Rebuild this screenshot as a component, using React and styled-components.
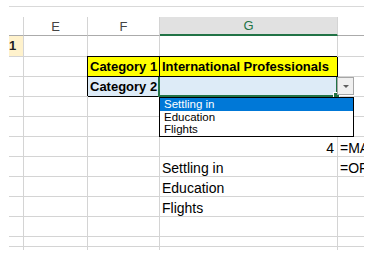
import React from 'react';
import styled, { createGlobalStyle } from 'styled-components';

const GlobalStyle = createGlobalStyle`
  html, body {
    margin: 0;
    padding: 0;
    background: #ffffff;
  }
  body {
    font-family: "Liberation Sans", Arial, sans-serif;
  }
`;

const Page = styled.div`
  padding: 6px 0 0 9px;
`;

const TopRule = styled.div`
  width: 355px;
  height: 1px;
  background: #d9d9d9;
  margin-bottom: 10px;
`;

const Sheet = styled.div`
  display: grid;
  grid-template-columns: 15px 64px 72px 178px 26px;
  grid-template-rows: 19px 21px repeat(9, 20px) 10px;
  width: 355px;
`;

const HeadCell = styled.div`
  box-sizing: border-box;
  display: flex;
  align-items: center;
  justify-content: center;
  font-size: 13px;
  color: ${(p) => (p.$selected ? '#217346' : '#444444')};
  background: ${(p) => (p.$selected ? '#e1e1e1' : '#ffffff')};
  border-right: ${(p) => (p.$last ? 'none' : '1px solid #d4d4d4')};
  border-bottom: ${(p) => (p.$selected ? '2px solid #217346' : '1px solid #ababab')};
`;

const RowHead = styled.div`
  box-sizing: border-box;
  display: flex;
  align-items: flex-end;
  padding-bottom: 3px;
  font-size: 13px;
  font-weight: 700;
  color: #1f1f1f;
  background: ${(p) => (p.$active ? '#fff2cc' : '#ffffff')};
  border-right: 1px solid #d4d4d4;
  border-bottom: ${(p) => (p.$open ? 'none' : '1px solid #d4d4d4')};
`;

const Cell = styled.div`
  box-sizing: border-box;
  display: flex;
  align-items: flex-end;
  justify-content: ${(p) => (p.$right ? 'flex-end' : 'flex-start')};
  padding: 0 ${(p) => (p.$right ? '3px' : '0')} ${(p) => (p.$bold ? '1px' : '0')} 2px;
  font-size: ${(p) => (p.$bold ? '13px' : '14px')};
  font-weight: ${(p) => (p.$bold ? 700 : 400)};
  line-height: 16px;
  color: #000000;
  white-space: nowrap;
  overflow: hidden;
  background: ${(p) => p.$fill || '#ffffff'};
  border-right: ${(p) => (p.$boxed ? '1px solid #000' : p.$last ? 'none' : '1px solid #d4d4d4')};
  border-bottom: ${(p) => (p.$boxed ? '1px solid #000' : p.$open ? 'none' : '1px solid #d4d4d4')};
  box-shadow: ${(p) => (p.$boxed ? '-1px -1px 0 0 #000' : 'none')};
`;

const ActiveCell = styled.div`
  box-sizing: border-box;
  position: relative;
  z-index: 2;
  background: #ddebf7;
  border-right: 2px solid #217346;
  border-bottom: 2px solid #217346;
  box-shadow: -2px 0 0 0 #217346;
`;

const FillHandle = styled.div`
  position: absolute;
  right: -4px;
  bottom: -4px;
  width: 5px;
  height: 5px;
  background: #217346;
  border: 1px solid #ffffff;
`;

const DropButton = styled.div`
  position: absolute;
  left: 177px;
  top: 0;
  box-sizing: border-box;
  width: 17px;
  height: 18px;
  background: #f0f0f0;
  border: 1px solid #a6a6a6;
  display: flex;
  align-items: center;
  justify-content: center;
`;

const Arrow = styled.div`
  width: 0;
  height: 0;
  border-left: 3px solid transparent;
  border-right: 3px solid transparent;
  border-top: 3px solid #5f5f5f;
  margin-top: 1px;
`;

const DropList = styled.ul`
  position: absolute;
  left: -1px;
  top: 20px;
  box-sizing: border-box;
  width: 195px;
  height: 40px;
  margin: 0;
  padding: 0;
  list-style: none;
  background: #ffffff;
  border: 1px solid #000000;
`;

const DropItem = styled.li`
  height: 12.67px;
  line-height: 12.67px;
  padding-left: 4px;
  font-size: 11.5px;
  color: ${(p) => (p.$selected ? '#ffffff' : '#000000')};
  background: ${(p) => (p.$selected ? '#0078d7' : 'transparent')};
  white-space: nowrap;
`;

const columns = ['E', 'F', 'G', ''];

const rows = [
  { head: '1', cells: [{}, {}, {}, {}] },
  {
    cells: [
      {},
      { text: 'Category 1', bold: true, boxed: true, fill: '#ffff00' },
      { text: 'International Professionals', bold: true, boxed: true, fill: '#ffff00' },
      {},
    ],
  },
  {
    cells: [{}, { text: 'Category 2', bold: true, boxed: true, fill: '#ddebf7' }, { active: true }, {}],
  },
  { cells: [{}, {}, {}, {}] },
  { cells: [{}, {}, {}, {}] },
  { cells: [{}, {}, { text: '4', right: true }, { text: '=MA' }] },
  { cells: [{}, {}, { text: 'Settling in' }, { text: '=OF' }] },
  { cells: [{}, {}, { text: 'Education' }, {}] },
  { cells: [{}, {}, { text: 'Flights' }, {}] },
  { cells: [{}, {}, {}, {}] },
  { cells: [{}, {}, {}, {}] },
  { open: true, cells: [{}, {}, {}, {}] },
];

const options = ['Settling in', 'Education', 'Flights'];

function Dropdown() {
  return (
    <ActiveCell>
      <FillHandle />
      <DropButton>
        <Arrow />
      </DropButton>
      <DropList>
        {options.map((o, i) => (
          <DropItem key={o} $selected={i === 0}>
            {o}
          </DropItem>
        ))}
      </DropList>
    </ActiveCell>
  );
}

export default function App() {
  return (
    <>
      <GlobalStyle />
      <Page>
        <TopRule />
        <Sheet>
          <HeadCell />
          {columns.map((c, i) => (
            <HeadCell key={i} $selected={c === 'G'} $last={i === columns.length - 1}>
              {c}
            </HeadCell>
          ))}
          {rows.map((row, r) => (
            <React.Fragment key={r}>
              <RowHead $active={!!row.head} $open={row.open}>
                {row.head}
              </RowHead>
              {row.cells.map((cell, c) =>
                cell.active ? (
                  <Dropdown key={c} />
                ) : (
                  <Cell
                    key={c}
                    $bold={cell.bold}
                    $boxed={cell.boxed}
                    $fill={cell.fill}
                    $right={cell.right}
                    $last={c === row.cells.length - 1}
                    $open={row.open}
                  >
                    {cell.text}
                  </Cell>
                )
              )}
            </React.Fragment>
          ))}
        </Sheet>
      </Page>
    </>
  );
}
